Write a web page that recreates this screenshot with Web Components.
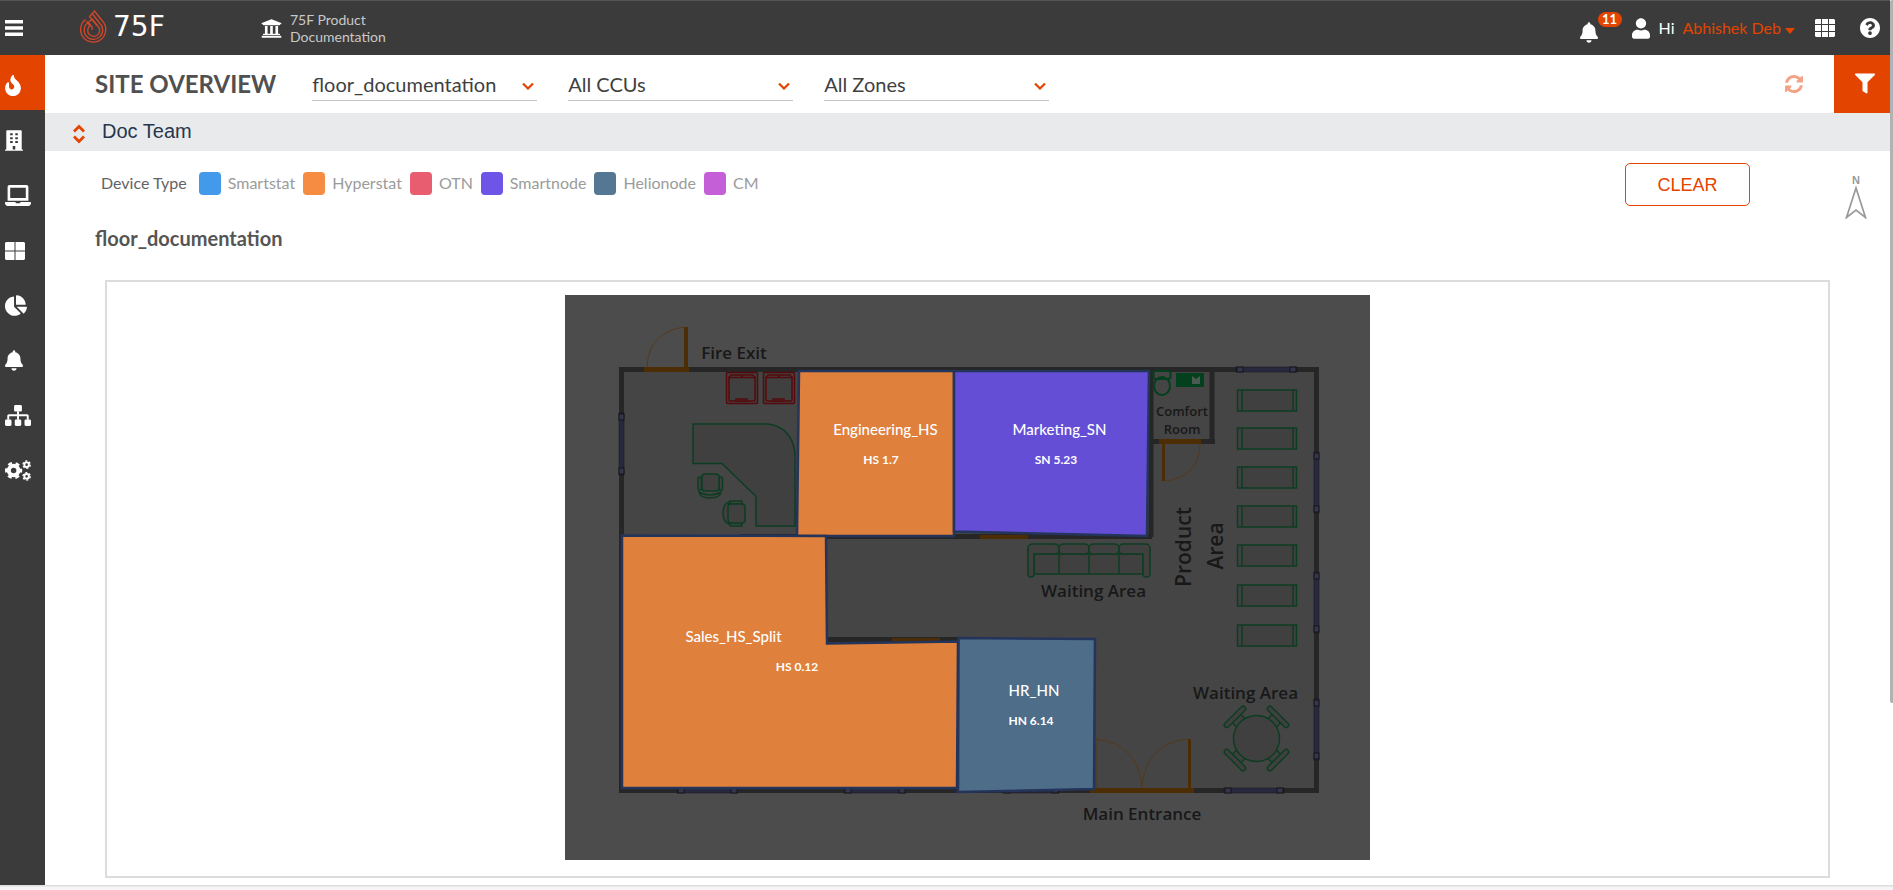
<!DOCTYPE html>
<html lang="en">
<head>
<meta charset="utf-8">
<title>Site Overview</title>
<style>
body {
  margin: 0;
  font-family: Lato, "Open Sans", sans-serif;
  --primary-color: #e34400;
  --bar-color: #3b3b3b;
  --strip-color: #e9eaec;
}
</style>
</head>
<body>
<site-app></site-app>

<script>
const icons = {
  bars: ["0 0 18 16", `<path d="M0 0h18v3.5H0zM0 6.3h18v3.5H0zM0 12.5h18V16H0z"/>`],
  bank: ["0 32 512 448", `<path d="M496 128v16a8 8 0 0 1-8 8h-24v12c0 6.627-5.373 12-12 12H60c-6.627 0-12-5.373-12-12v-12H24a8 8 0 0 1-8-8v-16a8 8 0 0 1 4.941-7.392l232-88a7.996 7.996 0 0 1 6.118 0l232 88A8 8 0 0 1 496 128zm-24 304H40c-13.255 0-24 10.745-24 24v16a8 8 0 0 0 8 8h464a8 8 0 0 0 8-8v-16c0-13.255-10.745-24-24-24zM96 192v192H60c-6.627 0-12 5.373-12 12v20h416v-20c0-6.627-5.373-12-12-12h-36V192h-64v192h-64V192h-64v192h-64V192H96z"/>`],
  fire: ["0 0 384 512", `<path d="M216 23.86c0-23.8-30.65-32.77-44.15-13.04C48 191.85 224 200 224 288c0 35.63-29.11 64.46-64.85 63.99-35.17-.45-63.15-29.77-63.15-64.94v-85.51c0-21.7-26.47-32.23-41.43-16.5C27.8 213.16 0 261.33 0 320c0 105.87 86.13 192 192 192s192-86.13 192-192c0-170.29-168-193-168-296.14z"/>`],
  building: ["0 0 448 512", `<path fill-rule="evenodd" d="M436 480h-20V24c0-13-11-24-24-24H56C43 0 32 11 32 24v456H12c-7 0-12 5-12 12v20h448v-20c0-7-5-12-12-12zM128 76h64v52h-64zM256 76h64v52h-64zM128 172h64v52h-64zM256 172h64v52h-64zM128 268h64v52h-64zM256 268h64v52h-64zM192 392h64v88h-64z"/>`],
  laptop: ["0 0 640 512", `<path d="M624 416H381.54c-.74 19.81-14.71 32-32.74 32H288c-18.69 0-33.02-17.47-32.77-32H16c-8.8 0-16 7.2-16 16v16c0 35.2 28.8 64 64 64h512c35.2 0 64-28.8 64-64v-16c0-8.8-7.2-16-16-16zM576 48c0-26.4-21.6-48-48-48H112C85.6 0 64 21.6 64 48v336h512V48zm-64 272H128V64h384v256z"/>`],
  tiles: ["0 0 20 18", `<path d="M1 0h8.5v8.5H0V1zM10.500 0H19l1 1v7.500h-9.500zM0 9.500h9.500V18H1l-1-1zM10.500 9.500H20V17l-1 1h-8.500z"/>`],
  pie: ["0 0 544 512", `<path d="M527.79 288H290.5l158.03 158.03c6.04 6.04 15.98 6.53 22.19.68 38.7-36.46 65.32-85.61 73.13-140.86 1.34-9.46-6.51-17.85-16.06-17.85zm-15.83-64.8C503.72 103.74 408.26 8.28 288.8.04 279.68-.59 272 7.1 272 16.24V240h223.77c9.14 0 16.82-7.68 16.19-16.8zM224 288V50.71c0-9.55-8.39-17.4-17.84-16.06C86.99 51.49-4.1 155.6.14 280.37 4.5 408.51 114.83 513.59 243.03 511.98c50.4-.63 96.97-16.87 135.26-44.03 7.9-5.6 8.42-17.23 1.57-24.08L224 288z"/>`],
  bell: ["0 0 448 512", `<path d="M224 512c35.32 0 63.97-28.65 63.97-64H160.03c0 35.35 28.65 64 63.97 64zm215.39-149.71c-19.32-20.76-55.47-51.99-55.47-154.29 0-77.7-54.48-139.9-127.94-155.16V32c0-17.67-14.32-32-31.98-32s-31.98 14.33-31.98 32v20.84C118.56 68.1 64.08 130.3 64.08 208c0 102.3-36.15 133.53-55.47 154.29-6 6.45-8.66 14.16-8.61 21.71.11 16.4 12.98 32 32.1 32h383.8c19.12 0 32-15.6 32.1-32 .05-7.55-2.61-15.27-8.61-21.71z"/>`],
  sitemap: ["0 0 640 512", `<rect x="224" width="192" height="160" rx="32"/><rect y="352" width="160" height="160" rx="32"/><rect x="240" y="352" width="160" height="160" rx="32"/><rect x="480" y="352" width="160" height="160" rx="32"/><path d="M296 150h48v74h200c22 0 40 18 40 40v96h-48v-88H344v88h-48v-88H104v88H56v-96c0-22 18-40 40-40h200z"/>`],
  cogs: ["0 0 640 512", `<g fill="none" stroke="currentColor"><circle cx="212" cy="256" r="118" stroke-width="100"/><circle cx="212" cy="256" r="182" stroke-width="60" stroke-dasharray="100 90.590" stroke-dashoffset="50"/><circle cx="532" cy="112" r="56" stroke-width="48"/><circle cx="532" cy="112" r="90" stroke-width="32" stroke-dasharray="52 42.250"/><circle cx="532" cy="400" r="56" stroke-width="48"/><circle cx="532" cy="400" r="90" stroke-width="32" stroke-dasharray="52 42.250"/></g>`],
  user: ["0 0 448 512", `<path d="M224 256c70.7 0 128-57.3 128-128S294.7 0 224 0 96 57.3 96 128s57.3 128 128 128zm89.6 32h-16.7c-22.2 10.2-46.9 16-72.9 16s-50.6-5.8-72.9-16h-16.7C60.2 288 0 348.2 0 422.4V464c0 26.5 21.5 48 48 48h352c26.5 0 48-21.5 48-48v-41.600c0-74.200-60.200-134.400-134.400-134.400z"/>`],
  caret: ["0 0 10 6", `<path d="M0 0h10L5 6z"/>`],
  grid: ["0 0 20 18", `<path d="M1 0h5v5H0V1zM7 0h6v5H7zM14 0h5l1 1v4h-6zM0 6h6v6H0zM7 6h6v6H7zM14 6h6v6h-6zM0 13h6v5H1l-1-1zM7 13h6v5H7zM14 13h6v4l-1 1h-5z"/>`],
  help: ["8 8 496 496", `<path d="M504 256c0 136.997-111.043 248-248 248S8 392.997 8 256C8 119.083 119.043 8 256 8s248 111.083 248 248zM262.655 90c-54.497 0-89.255 22.957-116.549 63.758-3.536 5.286-2.353 12.415 2.715 16.258l34.699 26.31c5.205 3.947 12.621 3.008 16.665-2.122 17.864-22.658 30.113-35.797 57.303-35.797 20.429 0 45.698 13.148 45.698 32.958 0 14.976-12.363 22.667-32.534 33.976C247.128 238.528 216 254.941 216 296v4c0 6.627 5.373 12 12 12h56c6.627 0 12-5.373 12-12v-1.333c0-28.462 83.186-29.647 83.186-106.667 0-58.002-60.165-102-116.531-102zM256 338c-25.365 0-46 20.635-46 46 0 25.364 20.635 46 46 46s46-20.636 46-46c0-25.365-20.635-46-46-46z"/>`],
  sync: ["8 8 496 496", `<path d="M370.72 133.28C339.458 104.008 298.888 87.962 255.848 88c-77.458.068-144.328 53.178-162.791 126.85-1.344 5.363-6.122 9.15-11.651 9.15H24.103c-7.498 0-13.194-6.807-11.807-14.176C33.933 94.924 134.813 8 256 8c66.448 0 126.791 26.136 171.315 68.685L463.03 40.97C478.149 25.851 504 36.559 504 57.941V192c0 13.255-10.745 24-24 24H345.941c-21.382 0-32.09-25.851-16.971-40.971l41.75-41.749zM32 296h134.059c21.382 0 32.09 25.851 16.971 40.971l-41.75 41.75c31.262 29.273 71.835 45.319 114.876 45.28 77.418-.07 144.315-53.144 162.787-126.849 1.344-5.363 6.122-9.15 11.651-9.15h57.304c7.498 0 13.194 6.807 11.807 14.176C478.067 417.076 377.187 504 256 504c-66.448 0-126.791-26.136-171.315-68.685L48.97 471.03C33.851 486.149 8 475.441 8 454.059V320c0-13.255 10.745-24 24-24z"/>`],
  filter: ["0 0 512 512", `<path d="M487.976 0H24.028C2.71 0-8.047 25.866 7.058 40.971L192 225.941V432c0 7.831 3.821 15.17 10.237 19.662l80 55.98C298.02 518.69 320 507.493 320 487.98V225.941l184.947-184.97C520.021 25.896 509.338 0 487.976 0z"/>`],
  down: ["0 0 12 8", `<path d="M1 1.500 6 6.500l5-5" fill="none" stroke="currentColor" stroke-width="2.200"/>`],
  updown: ["0 0 12 20", `<path d="M1 7.500 6 2.500l5 5M1 12.500l5 5 5-5" fill="none" stroke="currentColor" stroke-width="2.800"/>`],
  flame: ["0 0 27 33", `<g fill="none" stroke="currentColor" stroke-width="1.300"><path d="M5.500 9.500A12.600 12.600 0 1 0 22 10.500L14.500 1 9.500 6.500l7.500 9"/><path d="M8 12.500a9.300 9.300 0 1 0 11.500 0.500L12.500 4"/><path d="M9.500 15.500 6.500 11M9.800 15.800a6 6 0 1 0 8 .200l-5.800-7L8.500 12.500l3.500 4.500v3"/></g>`],
  north: ["0 0 22 32", `<path d="M11 1.500 20.500 31 11 23.500 1.500 31z" fill="none" stroke="currentColor" stroke-width="1.700"/>`],
};

class UiIcon extends HTMLElement {
  constructor() {
    super();
    this.attachShadow({ mode: "open" });
  }

  connectedCallback() {
    const [viewBox, shape] = icons[this.getAttribute("name")];
    this.shadowRoot.innerHTML = `
<style>
:host { display: inline-block; flex: none; }
svg { display: block; width: 100%; height: 100%; }
</style>
<svg viewBox="${viewBox}" fill="currentColor" aria-hidden="true">${shape}</svg>`;
  }
}
customElements.define("ui-icon", UiIcon);

class TopBar extends HTMLElement {
  constructor() {
    super();
    this.attachShadow({ mode: "open" });
    this.shadowRoot.innerHTML = `
<style>
:host {
  display: flex;
  align-items: center;
  box-sizing: border-box;
  height: 55px;
  padding: 0 10px 0 5px;
  background: var(--bar-color);
  border-top: 1px solid #555;
  color: #fff;
}
button {
  padding: 0;
  border: 0;
  background: none;
  color: inherit;
  font: inherit;
  display: flex;
  cursor: pointer;
}
.logo { display: flex; align-items: center; gap: 6px; margin-left: 57px; width: 181px; color: #fff; text-decoration: none; }
.logo ui-icon { width: 27px; height: 33px; color: #d4472a; margin-top: -4px; }
.logo span { font: 28px/32px "DejaVu Sans", sans-serif; margin-top: -2px; }
.org { display: flex; align-items: center; gap: 8px; font-size: 14px; line-height: 17px; color: #c9c9c9; }
.org ui-icon { color: #fff; }
nav { margin-left: auto; display: flex; align-items: center; }
.alerts { position: relative; margin-right: 34px; margin-top: 8px; }
.badge {
  position: absolute;
  left: 18px;
  top: -10px;
  width: 24px;
  border-radius: 8px;
  background: var(--primary-color);
  font: 700 13px/15px Lato, sans-serif;
  text-align: center;
}
.account { display: flex; align-items: center; gap: 8px; font-size: 16px; line-height: 20px; margin-right: 20px; }
.account > ui-icon { margin-right: 1px; }
.account button { color: var(--primary-color); align-items: center; gap: 4px; }
.account button ui-icon { margin-top: 6px; }
.apps { margin-right: 25px; margin-top: -1px; }
</style>
<button aria-label="Menu"><ui-icon name="bars" style="width:18px;height:16px"></ui-icon></button>
<a class="logo" href="#"><ui-icon name="flame"></ui-icon><span>75F</span></a>
<div class="org"><ui-icon name="bank" style="width:21px;height:21px"></ui-icon><div>75F Product<br>Documentation</div></div>
<nav>
  <button class="alerts" aria-label="Alerts"><ui-icon name="bell" style="width:18px;height:21px"></ui-icon><span class="badge">11</span></button>
  <div class="account">
    <ui-icon name="user" style="width:18px;height:21px"></ui-icon>
    <span>Hi</span>
    <button>Abhishek Deb<ui-icon name="caret" style="width:10px;height:6px"></ui-icon></button>
  </div>
  <button class="apps" aria-label="Apps"><ui-icon name="grid" style="width:20px;height:18px"></ui-icon></button>
  <button aria-label="Help"><ui-icon name="help" style="width:20px;height:20px"></ui-icon></button>
</nav>`;
  }
}
customElements.define("top-bar", TopBar);

class SideNav extends HTMLElement {
  constructor() {
    super();
    this.attachShadow({ mode: "open" });
    const items = [
      ["fire", "Site overview", 16, 21],
      ["building", "Buildings", 18, 21],
      ["laptop", "Devices", 26, 21],
      ["tiles", "Dashboards", 20, 18],
      ["pie", "Reports", 22, 21],
      ["bell", "Alerts", 18, 21],
      ["sitemap", "Sequencer", 26, 21],
      ["cogs", "Settings", 26, 21],
    ];
    this.shadowRoot.innerHTML = `
<style>
:host { display: block; flex: none; width: 45px; background: var(--bar-color); }
a { display: flex; align-items: center; box-sizing: border-box; height: 55px; padding: 6px 0 0 5px; color: #fff; }
a:first-of-type { background: var(--primary-color); }
</style>
${items.map(([icon, label, w, h]) => `<a href="#" aria-label="${label}"><ui-icon name="${icon}" style="width:${w}px;height:${h}px"></ui-icon></a>`).join("")}`;
  }
}
customElements.define("side-nav", SideNav);

class DropDown extends HTMLElement {
  constructor() {
    super();
    this.attachShadow({ mode: "open" });
  }

  connectedCallback() {
    this.shadowRoot.innerHTML = `
<style>
:host {
  display: grid;
  align-items: center;
  width: 225px;
  height: 32px;
  border-bottom: 1px solid #c4c4c4;
}
select, ui-icon { grid-area: 1 / 1; }
select {
  appearance: none;
  width: 100%;
  height: 32px;
  padding: 0 24px 0 0;
  border: 0;
  background: none;
  font: 20px/24px Lato, sans-serif;
  color: #3f3f3f;
}
ui-icon { justify-self: end; width: 12px; height: 8px; margin: 4px 3px 0 0; color: var(--primary-color); pointer-events: none; }
</style>
<select aria-label="${this.getAttribute("label")}"><option>${this.getAttribute("value")}</option></select>
<ui-icon name="down"></ui-icon>`;
  }
}
customElements.define("drop-down", DropDown);

class PageHead extends HTMLElement {
  constructor() {
    super();
    this.attachShadow({ mode: "open" });
    this.shadowRoot.innerHTML = `
<style>
:host { display: flex; align-items: center; height: 58px; padding-left: 50px; }
h1 { margin: 0 36px 0 0; font-size: 24px; line-height: 30px; font-weight: 700; color: #505050; }
.filters { display: flex; gap: 31px; }
button { border: 0; padding: 0; display: flex; align-items: center; justify-content: center; cursor: pointer; }
.refresh { margin-left: auto; margin-right: 31px; background: none; color: #f3a384; }
.refresh ui-icon { width: 18px; height: 18px; }
.filter { width: 56px; height: 58px; background: var(--primary-color); color: #fff; padding-left: 6px; padding-bottom: 2px; }
.filter ui-icon { width: 20px; height: 21px; }
</style>
<h1>SITE OVERVIEW</h1>
<div class="filters"><slot></slot></div>
<button class="refresh" aria-label="Refresh"><ui-icon name="sync"></ui-icon></button>
<button class="filter" aria-label="Filter"><ui-icon name="filter"></ui-icon></button>`;
  }
}
customElements.define("page-head", PageHead);

class TeamStrip extends HTMLElement {
  constructor() {
    super();
    this.attachShadow({ mode: "open" });
    this.shadowRoot.innerHTML = `
<style>
:host {
  display: flex;
  align-items: center;
  gap: 17px;
  height: 38px;
  padding-left: 28px;
  background: var(--strip-color);
  color: #26374f;
  font: 20px/24px "Liberation Sans", Arial, sans-serif;
}
button { border: 0; padding: 0; margin-top: 3px; background: none; color: var(--primary-color); display: flex; }
span { margin-top: -2px; }
ui-icon { width: 12px; height: 20px; }
</style>
<button aria-label="Switch team"><ui-icon name="updown"></ui-icon></button>
<span><slot></slot></span>`;
  }
}
customElements.define("team-strip", TeamStrip);

class DeviceLegend extends HTMLElement {
  constructor() {
    super();
    this.attachShadow({ mode: "open" });
    const types = [
      ["Smartstat", "#439aeb"],
      ["Hyperstat", "#f68c42"],
      ["OTN", "#e85d6f"],
      ["Smartnode", "#6e55e8"],
      ["Helionode", "#547793"],
      ["CM", "#c55fd8"],
    ];
    this.shadowRoot.innerHTML = `
<style>
:host { display: flex; align-items: center; font-size: 16px; line-height: 24px; color: #9b9b9b; }
b { font-weight: 400; color: #636363; margin-right: 12px; }
ul { display: flex; gap: 8px; margin: 0; padding: 0; list-style: none; }
li { display: flex; align-items: center; gap: 7px; }
i { width: 22px; height: 23px; border-radius: 4px; }
</style>
<b>Device Type</b>
<ul>${types.map(([name, color]) => `<li><i style="background:${color}"></i>${name}</li>`).join("")}</ul>`;
  }
}
customElements.define("device-legend", DeviceLegend);

class FloorPlan extends HTMLElement {
  constructor() {
    super();
    this.attachShadow({ mode: "open" });
    this.shadowRoot.innerHTML = `
<style>
:host { display: block; width: 805px; max-width: 100%; }
svg { display: block; width: 100%; height: auto; background: #4c4c4c; }
.wall { fill: none; stroke: #262626; stroke-width: 5; }
.green { fill: #404040; stroke: #0c3d22; stroke-width: 1.500; }
.toilet { fill: none; stroke: #03401d; stroke-width: 2; }
.red { fill: #404040; stroke: #560a0c; stroke-width: 1.500; }
.door { fill: #4c2d04; }
.swing { fill: none; stroke: #55391a; stroke-width: 1; }
.window { fill: #28283e; stroke: #16161f; stroke-width: .500; }
.clip { fill: #35364a; stroke: #14141c; stroke-width: 1; }
.note { font: 600 17px "Open Sans", sans-serif; fill: #181818; text-anchor: middle; }
.note.small { font-size: 13px; }
.note.big { font-size: 21px; }
.zone { stroke: #24345a; stroke-width: 2.500; }
.name { font-size: 15px; font-weight: 500; fill: #fff; text-anchor: middle; }
.value { font-size: 12px; font-weight: 700; fill: #fff; text-anchor: middle; }
</style>
<svg viewBox="0 0 805 565" role="img" aria-label="Floor plan">
  <rect class="wall" x="56.500" y="74.500" width="695" height="421" style="fill:#454545"/>
  <path class="wall" d="M586 77v165M647 77v72M586 146.500h64M175 241.500H587M263 344.500H393"/>
  <g id="windows"></g>

  <path class="door" d="M79 72h45v5H79zM119 32h4v40h-4zM594 144h42v5h-42zM597 149h3v37h-3zM525 493h104v5H525zM623 444h3v49h-3zM415 240h48v4h-48zM327 343h48v3h-48z"/>
  <path class="swing" d="M82 72q2-36 38-40M600 186q34-4 35-37M531 493v-49q42 5 46 48q4-44 46-48"/>

  <g class="red">
    <rect x="161.500" y="77.500" width="31" height="31" rx="1"/><rect x="164" y="82" width="26" height="24" rx="1"/>
    <path d="M166 80h10l1 1.500 1-1.500h10l2 2.500h-26zM171 104h11v2h-11z"/>
    <rect x="198.500" y="77.500" width="31" height="31" rx="1"/><rect x="201" y="82" width="26" height="24" rx="1"/>
    <path d="M203 80h10l1 1.500 1-1.500h10l2 2.500h-26zM208 104h11v2h-11z"/>
  </g>

  <g class="green">
    <path d="M128 129h75q23 3 27 28v74h-39v-29.500l-34-33h-29z"/>
    <path d="M134 197q11 6 22 0q-1 6-11 6t-11-6z"/>
    <rect x="133" y="182" width="3.500" height="13" rx="1.500"/><rect x="154" y="182" width="3.500" height="13" rx="1.500"/>
    <rect x="137" y="179" width="17" height="17" rx="3"/>
    <path d="M164 207q-6 2-6 11t6 11z"/>
    <rect x="165" y="206" width="12" height="3"/><rect x="165" y="228" width="12" height="3"/>
    <rect x="163" y="209" width="17" height="19" rx="3"/>
  </g>

  <g class="toilet">
    <rect x="588.500" y="76" width="17" height="8" rx="2"/><ellipse cx="597" cy="91" rx="8" ry="9"/>
    <path d="M611 78h28v14h-28z" style="fill:#03401d;stroke:none"/>
    <path d="M627 81l4 3 4-3v8h-8z" style="fill:#4a5a50;stroke:none"/>
  </g>

  <g class="green" id="tables"></g>

  <g class="green">
    <path d="M469 259h109v20H469z"/>
    <path d="M494 259v20M524 259v20M554 259v20"/>
    <rect x="463" y="249" width="31" height="10" rx="4"/><rect x="494" y="249" width="30" height="10" rx="4"/>
    <rect x="524" y="249" width="30" height="10" rx="4"/><rect x="554" y="249" width="31" height="10" rx="4"/>
    <path d="M463 254v25q0 3 3 3t3-3v-20M585 254v25q0 3-3.500 3t-3.500-3v-20"/>
  </g>

  <g class="green" transform="translate(691.500 443.500)">
    <g id="chairs"></g>
    <circle r="23"/>
  </g>

  <g class="note">
    <text x="169" y="64">Fire Exit</text>
    <text x="528.500" y="302">Waiting Area</text>
    <text x="680.500" y="404">Waiting Area</text>
    <text x="577" y="525">Main Entrance</text>
  </g>
  <text class="note small" x="617" y="121">Comfort</text>
  <text class="note small" x="617" y="139">Room</text>
  <text class="note big" transform="translate(626 252) rotate(-90)">Product</text>
  <text class="note big" transform="translate(658 251) rotate(-90)">Area</text>

  <path class="zone" fill="#df803d" d="M234 76H389V241L232 241z"/>
  <path class="zone" fill="#644ed6" d="M389 76H584L582 241 389 236.500z"/>
  <path class="zone" fill="#df803d" d="M57 240.500 261 241 262 348.500 393 346.500 392 493H57z"/>
  <path class="zone" fill="#4d6d88" d="M393.500 343 530 344 529 494 393 497z"/>

  <text class="name" x="320.500" y="140">Engineering_HS</text><text class="value" x="316" y="169">HS 1.7</text>
  <text class="name" x="494.500" y="140">Marketing_SN</text><text class="value" x="491" y="169">SN 5.23</text>
  <text class="name" x="168.500" y="347">Sales_HS_Split</text><text class="value" x="232" y="376">HS 0.12</text>
  <text class="name" x="469" y="401">HR_HN</text><text class="value" x="466" y="430">HN 6.14</text>
</svg>`;

    this.shadowRoot.getElementById("tables").innerHTML = [95, 133, 172, 211, 250, 290, 330]
      .map((y) => `<path d="M672.500 ${y}h59v21h-59zM677 ${y}v21M728 ${y}v21"/>`).join("");

    this.shadowRoot.getElementById("chairs").innerHTML = [45, 135, 225, 315]
      .map((a) => `<g transform="rotate(${a})"><path d="M22-6h7v12h-7z"/><rect x="28" y="-14" width="5" height="28" rx="2.500"/></g>`).join("");

    // x, y, length and direction of each window in the outer wall
    const windows = [
      [671, 72, 61, 0], [659, 493, 60, 0], [112, 493, 61, 0], [279, 493, 62, 0], [438, 493, 56, 0],
      [54, 118, 62, 1], [749, 157, 61, 1], [749, 277, 61, 1], [749, 404, 61, 1],
    ];
    this.shadowRoot.getElementById("windows").innerHTML = windows
      .map(([x, y, len, upright]) => {
        const box = (at, size, cls) => upright
          ? `<rect class="${cls}" x="${x}" y="${y + at}" width="5" height="${size}"/>`
          : `<rect class="${cls}" x="${x + at}" y="${y}" width="${size}" height="5"/>`;
        return box(0, len, "window") + box(1, 6, "clip") + box(len - 7, 6, "clip");
      }).join("");
  }
}
customElements.define("floor-plan", FloorPlan);

class FloorView extends HTMLElement {
  constructor() {
    super();
    this.attachShadow({ mode: "open" });
    this.shadowRoot.innerHTML = `
<style>
:host { display: block; padding: 12px 23px 7px 50px; }
.tools { display: flex; align-items: flex-start; }
device-legend { margin: 8px auto 0 6px; }
.clear {
  width: 125px;
  height: 43px;
  margin-right: 95px;
  border: 1px solid var(--primary-color);
  border-radius: 5px;
  background: #fff;
  color: var(--primary-color);
  font: 18px/24px "Liberation Sans", Arial, sans-serif;
}
.north { display: flex; flex-direction: column; align-items: center; margin-top: 11px; color: #999; font: 700 11px/12px "Liberation Sans", Arial, sans-serif; }
.north ui-icon { width: 22px; height: 33px; }
h2 { margin: 7px 0 0; font-size: 20px; line-height: 24px; font-weight: 700; color: #555; }
.frame {
  display: flex;
  justify-content: center;
  margin: 30px 37px 0 10px;
  padding: 13px 13px 16px;
  border: 2px solid #dcdcdc;
}
</style>
<div class="tools">
  <device-legend></device-legend>
  <button class="clear">CLEAR</button>
  <div class="north">N<ui-icon name="north"></ui-icon></div>
</div>
<h2>floor_documentation</h2>
<div class="frame"><slot></slot></div>`;
  }
}
customElements.define("floor-view", FloorView);

class SiteApp extends HTMLElement {
  constructor() {
    super();
    this.attachShadow({ mode: "open" });
    this.shadowRoot.innerHTML = `
<style>
:host { display: flex; flex-direction: column; min-height: 100vh; background: #fff; }
.body { display: flex; flex: 1; padding-right: 3px; }
top-bar { margin-right: 3px; }
main { flex: 1; min-width: 0; }
footer { height: 5px; background: linear-gradient(#dedede 0 1px, #e9e9e9 1px 2px, #f6f6f6 2px); }
.thumb {
  position: absolute;
  top: 0;
  right: 0;
  width: 3px;
  height: 79vh;
  border-radius: 2px 0 0 2px;
  background: #b2b2b2;
}
</style>
<top-bar></top-bar>
<div class="body">
  <side-nav></side-nav>
  <main>
    <page-head>
      <drop-down label="Floor" value="floor_documentation"></drop-down>
      <drop-down label="CCU" value="All CCUs"></drop-down>
      <drop-down label="Zone" value="All Zones"></drop-down>
    </page-head>
    <team-strip>Doc Team</team-strip>
    <floor-view><floor-plan></floor-plan></floor-view>
  </main>
</div>
<footer></footer>
<div class="thumb"></div>`;
  }
}
customElements.define("site-app", SiteApp);
</script>
</body>
</html>
